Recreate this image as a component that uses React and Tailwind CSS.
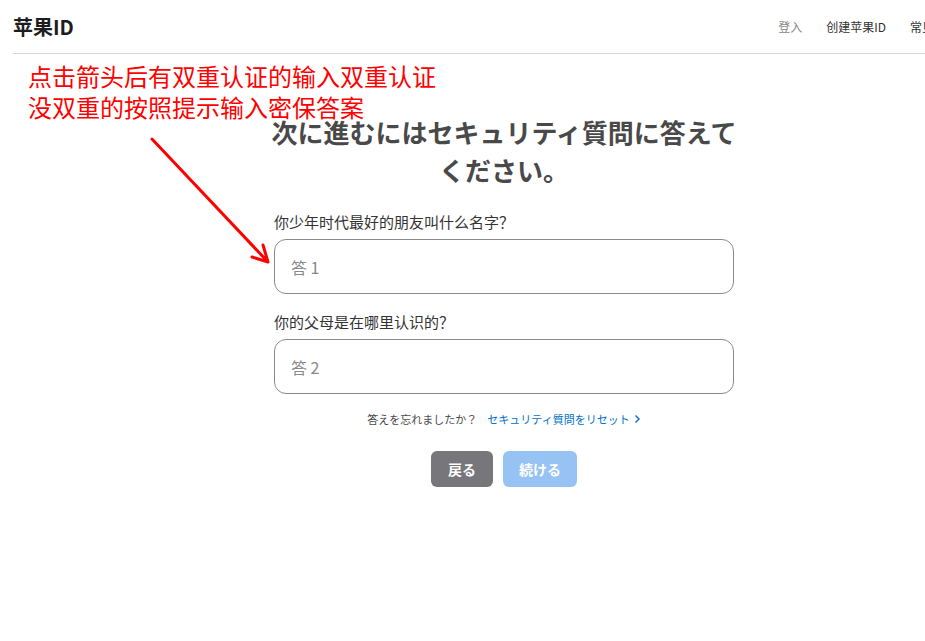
import React from "react";

const cjk = { fontFamily: '"Noto Sans CJK SC", "Noto Sans CJK JP", sans-serif' };
const jp = { fontFamily: '"Noto Sans CJK JP", "Noto Sans CJK SC", sans-serif' };

function Header() {
  return (
    <div className="mx-[13px] h-[54px] flex items-center border-b border-[#d6d6d6]" style={cjk}>
      <div className="text-[20px] font-semibold text-[#1d1d1f]">苹果ID</div>
      <nav className="ml-auto flex items-center gap-[24px] pr-[37px] text-[12px]">
        <span className="text-[#888]">登入</span>
        <span className="text-[#333]">创建苹果ID</span>
        <span className="text-[#333]">常见问题</span>
      </nav>
    </div>
  );
}

function Question({ label, placeholder }) {
  return (
    <div>
      <label className="block text-[15px] leading-[20px] text-[#333] mb-[7px]" style={cjk}>
        {label}
      </label>
      <input
        type="text"
        placeholder={placeholder}
        className="w-full h-[55px] px-[16px] rounded-[12px] border border-[#8a8a8a] text-[16px] placeholder:text-[#888] focus:outline-none"
        style={cjk}
      />
    </div>
  );
}

export default function App() {
  return (
    <div className="relative w-[1008px] h-[641px] bg-white overflow-hidden">
      <Header />

      <main className="flex flex-col items-center">
        <h1
          className="mt-[59px] text-[26px] leading-[38px] font-bold text-[#494949] text-center whitespace-nowrap"
          style={jp}
        >
          次に進むにはセキュリティ質問に答えて
          <br />
          ください。
        </h1>

        <div className="w-[460px] mt-[23px]">
          <Question label="你少年时代最好的朋友叫什么名字？" placeholder="答 1" />
          <div className="mt-[18px]">
            <Question label="你的父母是在哪里认识的？" placeholder="答 2" />
          </div>
        </div>

        <div className="mt-[17px] flex items-center text-[11px] leading-[16px]" style={jp}>
          <span className="text-[#494949]">答えを忘れましたか？</span>
          <a className="ml-[10px] text-[#0070c9] flex items-center gap-[4px]">
            セキュリティ質問をリセット
            <svg width="7" height="10" viewBox="0 0 7 10" fill="none">
              <path d="M1.5 1.5 L5 5 L1.5 8.5" stroke="#0070c9" strokeWidth="1.4" />
            </svg>
          </a>
        </div>

        <div className="mt-[24px] flex gap-[10px]" style={jp}>
          <button className="w-[62px] h-[36px] rounded-[6px] bg-[#76767b] text-white text-[14px] font-bold">
            戻る
          </button>
          <button className="w-[74px] h-[36px] rounded-[6px] bg-[#96c3f3] text-white text-[14px] font-bold">
            続ける
          </button>
        </div>
      </main>

      <div
        className="absolute left-[28px] top-[60px] text-[24px] leading-[31px] text-[#ff0000]"
        style={cjk}
      >
        点击箭头后有双重认证的输入双重认证
        <br />
        没双重的按照提示输入密保答案
      </div>

      <svg className="absolute left-0 top-0" width="300" height="300" viewBox="0 0 300 300">
        <path
          d="M152 139 L268 262 M268 262 L263 245 M268 262 L252 257"
          stroke="#ff0000"
          strokeWidth="3"
          strokeLinecap="round"
          fill="none"
        />
      </svg>
    </div>
  );
}
